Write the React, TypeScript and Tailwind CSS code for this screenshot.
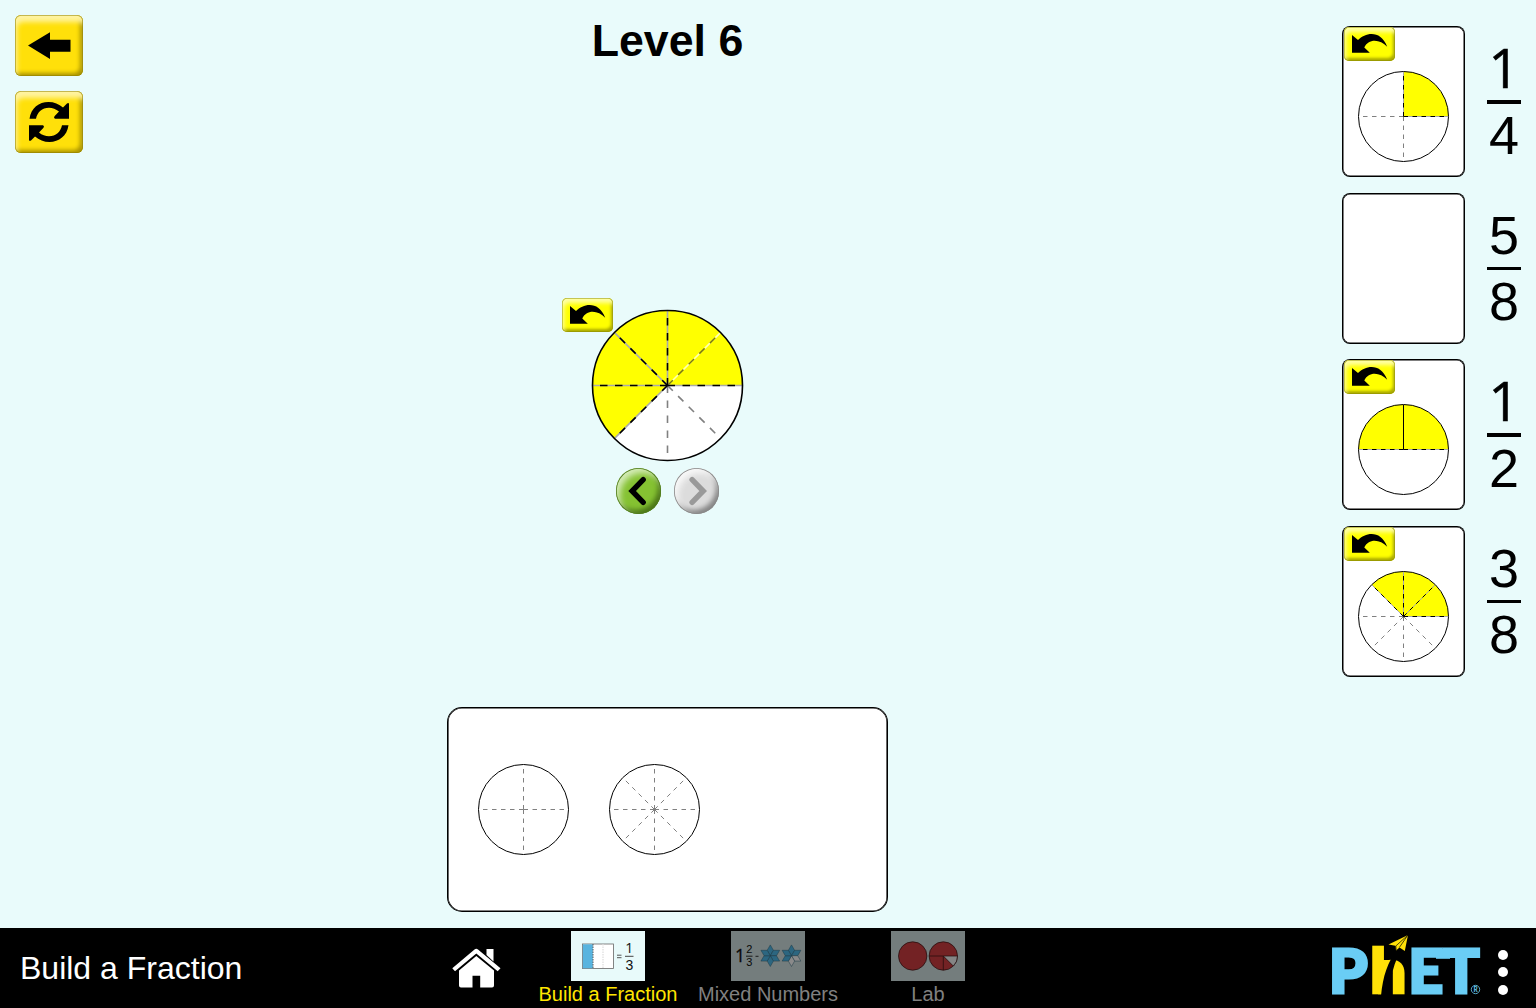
import React from "react";

const FONT = "font-['Liberation_Sans',Arial,sans-serif]";

function polar(c: number, r: number, deg: number): [number, number] {
  const a = (deg * Math.PI) / 180;
  return [c + r * Math.cos(a), c - r * Math.sin(a)];
}

// A filled sector, angles measured counter-clockwise from the right.
function sector(c: number, r: number, from: number, to: number) {
  const [x1, y1] = polar(c, r, from);
  const [x2, y2] = polar(c, r, to);
  const large = to - from > 180 ? 1 : 0;
  return `M${c} ${c}L${x1} ${y1}A${r} ${r} 0 ${large} 0 ${x2} ${y2}Z`;
}

type PieProps = {
  r: number;
  parts: number;
  stroke: number;
  filledTo?: number;
  strong?: number[];
  soft?: number[];
  solid?: number[];
};

function Pie({ r, parts, stroke, filledTo = 0, strong = [], soft = [], solid = [] }: PieProps) {
  const c = r + 0.5;
  const size = c * 2;
  const dash = `${r / 10} ${r / 10}`;
  const angles = Array.from({ length: parts }, (_, i) => (i * 360) / parts);
  const ray = (a: number, color: string, dashed: boolean, key: string) => {
    const [x, y] = polar(c, r - 0.5, a);
    return (
      <line key={key} x1={c} y1={c} x2={x} y2={y} stroke={color} strokeWidth={stroke} strokeDasharray={dashed ? dash : undefined} />
    );
  };
  return (
    <svg width={size} height={size} viewBox={`0 0 ${size} ${size}`} className="block shrink-0 overflow-visible">
      <circle cx={c} cy={c} r={r} fill="#fff" />
      {filledTo > 0 && <path d={sector(c, r, 0, filledTo)} fill="#ff0" />}
      {angles
        .filter((a) => !strong.includes(a) && !soft.includes(a) && !solid.includes(a))
        .map((a) => ray(a, "#808080", true, `g${a}`))}
      {soft.map((a) => ray(a, "#ffffb8", false, `sb${a}`))}
      {soft.map((a) => ray(a, "#808000", true, `sd${a}`))}
      {strong.map((a) => ray(a, "#aaa", false, `b${a}`))}
      {strong.map((a) => ray(a, "#000", true, `d${a}`))}
      {solid.map((a) => ray(a, "#000", false, `s${a}`))}
      <circle cx={c} cy={c} r={r} fill="none" stroke="#000" strokeWidth={stroke} />
    </svg>
  );
}

function UndoButton() {
  return (
    <button className="flex h-[34px] w-[51px] items-center justify-start rounded-[5px] bg-[#ff0] shadow-[inset_0_0_0_0.7px_#8c8c00aa,inset_2px_5px_4px_#ffffa8,inset_-2px_-3px_3px_#a8a800]">
      <svg width="51" height="34" viewBox="0 0 51 34">
        <path d="M8 8L14 13C22 5 37 3 43.2 19.8C36 11.500 24 11.500 20.300 20.500L25.800 25.700H8Z" fill="#000" />
      </svg>
    </button>
  );
}

function SquareButton({ tall, children }: { tall?: boolean; children: React.ReactNode }) {
  return (
    <button
      className={`flex w-[68px] items-center justify-center rounded-[6px] bg-[#ffe00a] shadow-[inset_0_0_0_0.8px_#8c7c00aa,inset_2px_7px_5px_#fff3a0,inset_-3px_-3px_4px_#a89200] ${
        tall ? "h-[62px]" : "h-[61px]"
      }`}
    >
      {children}
    </button>
  );
}

function RoundButton({ enabled }: { enabled: boolean }) {
  return (
    <button
      className={
        enabled
          ? "flex h-[46px] w-[45px] items-center justify-center rounded-full bg-[#85c232] shadow-[inset_0_0_0_0.8px_#4f7a1d,inset_4px_5px_6px_#d5ecb8,inset_-3px_-4px_5px_#4b7518]"
          : "flex h-[46px] w-[45px] items-center justify-center rounded-full bg-[#dcdcdc] shadow-[inset_0_0_0_0.8px_#888,inset_4px_5px_6px_#f8f8f8,inset_-3px_-4px_5px_#858585]"
      }
    >
      <svg width="45" height="46" viewBox="0.500 0 45 46" fill="none" strokeWidth="5.4" strokeLinecap="round">
        {enabled ? (
          <path d="M27.700 11.700L16.600 23L27.700 34.300" stroke="#000" />
        ) : (
          <path d="M18.600 11.700L29.700 23L18.600 34.300" stroke="#999" />
        )}
      </svg>
    </button>
  );
}

function Fraction({ n, d }: { n: number; d: number }) {
  return (
    <div className="flex h-[151px] w-[34px] flex-col items-center pt-[14px] text-[54px] leading-[54px]">
      <span
        className={
          n === 1
            ? "mt-[-1px] h-[60px] font-['Open_Sans',sans-serif] [-webkit-text-stroke:0.6px_#000]"
            : "h-[59px]"
        }
      >
        {n}
      </span>
      <span className="h-[3.500px] w-[34px] shrink-0 bg-black" />
      <span className="pt-[4px]">{d}</span>
    </div>
  );
}

function Target({ n, d, children }: { n: number; d: number; children?: React.ReactNode }) {
  return (
    <div className="flex gap-[23px]">
      <div className="relative flex h-[149px] w-[121px] justify-center rounded-[7px] bg-white pt-[44px] shadow-[0_0_0_1px_#000,inset_0_0_0_0.5px_#000]">
        {children && (
          <div className="absolute left-[0.500px] top-0">
            <UndoButton />
          </div>
        )}
        {children}
      </div>
      <Fraction n={n} d={d} />
    </div>
  );
}

function Tab({ label, active, children }: { label: string; active?: boolean; children: React.ReactNode }) {
  return (
    <div className={active ? "flex w-[160px] flex-col items-center text-[#ffe600]" : "flex w-[160px] flex-col items-center text-[#808080]"}>
      <div className={active ? "h-[50px] w-[74px] bg-[#e8fafa]" : "h-[50px] w-[74px] bg-[#747d7d]"}>
        <svg width="74" height="50" viewBox="0 0 74 50" className={FONT}>
          {children}
        </svg>
      </div>
      <span className="mt-px whitespace-nowrap text-[20px] leading-[24px]">{label}</span>
    </div>
  );
}

function Star({ x, y, missing }: { x: number; y: number; missing: number[] }) {
  const R = 10.800;
  const q = R / Math.sqrt(3);
  const pt = (r: number, deg: number) => {
    const a = (deg * Math.PI) / 180;
    return `${x + r * Math.cos(a)},${y + r * Math.sin(a)}`;
  };
  return (
    <g stroke="#1d3a46" strokeWidth="0.5">
      {[0, 1, 2, 3, 4, 5].map((i) => {
        const a = -90 + i * 60;
        return (
          <polygon
            key={i}
            points={`${x},${y} ${pt(q, a - 30)} ${pt(R, a)} ${pt(q, a + 30)}`}
            fill={missing.includes(i) ? "#8a8a8a" : "#2c6680"}
          />
        );
      })}
    </g>
  );
}

function Logo() {
  return (
    <svg width="156" height="76" viewBox="1328 932 156 76" className="overflow-visible font-['Lato',sans-serif]">
      <g fontSize="60.500" fontWeight="900" strokeWidth="3.200">
        <text x="1329" y="993" fill="#6acdf5" stroke="#6acdf5" textLength="38.500" lengthAdjust="spacingAndGlyphs">P</text>
        <text x="1370" y="993" fill="#ffe108" stroke="#ffe108" strokeWidth="2.600" textLength="36.500" lengthAdjust="spacingAndGlyphs">h</text>
        <text x="1408.500" y="993" fill="#6acdf5" stroke="#6acdf5" textLength="71" lengthAdjust="spacingAndGlyphs">ET</text>
      </g>
      <path d="M1436 948.700H1450V958.800H1436Z" fill="#6acdf5" />
      <path d="M1380 960H1391.500L1382 994.300H1378Z" fill="#ffe108" />
      <path d="M1381 996C1383 976 1387 963 1399 946L1402 949C1394 962 1390 976 1390 996Z" fill="#000" />
      <path d="M1388.500 944.500L1408 935L1404.800 951L1399.500 947.500L1396 950.500L1395.500 945.800Z" fill="#ffe108" />
      <path d="M1408 935L1395.800 946L1396.200 950M1408 935L1399.300 947.500" fill="none" stroke="#000" strokeWidth="0.7" />
      <circle cx="1475.500" cy="989.500" r="4.200" fill="none" stroke="#6acdf5" strokeWidth="0.8" />
      <text x="1475.500" y="992" fontSize="6.500" fontWeight="700" textAnchor="middle" fill="#6acdf5">R</text>
    </svg>
  );
}

export default function App() {
  return (
    <div className={`flex h-[1008px] w-[1536px] flex-col overflow-hidden bg-[#e9fbfb] text-black ${FONT}`}>
      <main className="flex h-[928px]">
        <aside className="flex w-[447px] flex-col gap-[15px] pl-[15px] pt-[15px]">
          <SquareButton>
            <svg width="68" height="61" viewBox="0 0 68 61">
              <path d="M13 30.500L35 17.300V24.700H55.500V36.800H35V44Z" fill="#000" />
            </svg>
          </SquareButton>
          <SquareButton tall>
            <svg width="68" height="62" viewBox="15 91 68 62">
              <path id="cycle" d="M29.500 118.700C31 108 39 102 48.500 102C54 102 59 104 63 107.500L67 103.500Q69 102.200 69 104.500V118.700H55Q53.300 118 54.500 116.200L59 111.500C56 109 52.500 107.700 49 107.700C42 107.700 37.500 112 36 118.700Z" />
              <use href="#cycle" transform="rotate(180 49 122)" />
            </svg>
          </SquareButton>
        </aside>

        <section className="flex w-[441px] flex-col items-center">
          <h1 className="mt-[14px] text-[44.700px] font-bold leading-[54px]">Level 6</h1>
          <div className="relative mt-[242px]">
            <Pie r={75} parts={8} stroke={1.600} filledTo={225} strong={[0, 90, 135, 180, 225]} soft={[45]} />
            <div className="absolute left-[-30px] top-[-12px]">
              <UndoButton />
            </div>
          </div>
          <div className="mt-[7px] flex gap-[13px]">
            <RoundButton enabled />
            <RoundButton enabled={false} />
          </div>
          <div className="mt-[194px] flex h-[203px] w-[439px] shrink-0 items-center gap-[40.500px] rounded-[14px] bg-white pl-[29.500px] shadow-[0_0_0_1px_#000,inset_0_0_0_0.6px_#000]">
            <Pie r={45} parts={4} stroke={1} />
            <Pie r={45} parts={8} stroke={1} />
          </div>
        </section>

        <aside className="flex flex-1 flex-col items-end gap-[15.500px] pr-[15px] pt-[27px]">
          <Target n={1} d={4}>
            <Pie r={45} parts={4} stroke={1} filledTo={90} strong={[0, 90]} />
          </Target>
          <Target n={5} d={8} />
          <Target n={1} d={2}>
            <Pie r={45} parts={2} stroke={1} filledTo={180} strong={[0, 180]} solid={[90]} />
          </Target>
          <Target n={3} d={8}>
            <Pie r={45} parts={8} stroke={1} filledTo={135} strong={[0, 45, 90, 135]} />
          </Target>
        </aside>
      </main>

      <footer className="flex h-[80px] bg-black">
        <div className="flex w-[432px] items-center pl-[20px] text-[32px] leading-none text-white">Build a Fraction</div>
        <div className="w-[96px] pl-[20px] pt-[20px]">
          <svg width="49" height="40" viewBox="452 948 49 40" fill="#fff">
            <path d="M486.500 949H493.500V961.500L486.500 955Z" />
            <path d="M474.500 949.500Q476.300 948 478 949.500L500.500 968.300L497.700 971.300L476.300 953.500L455 971.300L452.300 968.300Z" />
            <path d="M459 970.500L476.300 956L494 970.500V985.500Q494 987.500 492 987.500H480.200V975.700H472.500V987.500H461Q459 987.500 459 985.500Z" />
          </svg>
        </div>
        <nav className="flex pt-[3px]">
          <Tab label="Build a Fraction" active>
            <rect x="11.500" y="13" width="31" height="24.500" fill="#fff" stroke="#666" strokeWidth="0.8" />
            <rect x="11.800" y="13.300" width="10" height="24" fill="#58b4df" />
            <path d="M22 13V37.500" stroke="#333" strokeWidth="0.8" strokeDasharray="1.500 1" />
            <path d="M32 13V37.500" stroke="#ddd" strokeWidth="1.200" strokeDasharray="1.500 1" />
            <path d="M46 24.200H50.500M46 26.700H50.500" stroke="#444" strokeWidth="0.9" />
            <text x="58.300" y="22.300" fontSize="14" textAnchor="middle" fill="#111" className="font-['Open_Sans',sans-serif]">1</text>
            <path d="M54 25.300H62.500" stroke="#444" strokeWidth="1" />
            <text x="58.300" y="39" fontSize="14" textAnchor="middle" fill="#111">3</text>
          </Tab>
          <Tab label="Mixed Numbers">
            <text x="4" y="31.300" fontSize="17.500" fill="#080808" stroke="#080808" strokeWidth="0.3" className="font-['Open_Sans',sans-serif]">1</text>
            <text x="18.300" y="22.300" fontSize="11" textAnchor="middle" fill="#080808">2</text>
            <path d="M15 25.200H21.500M24.500 25.300H27.500" stroke="#111" strokeWidth="0.9" />
            <text x="18.300" y="35.300" fontSize="11" textAnchor="middle" fill="#080808">3</text>
            <Star x={39.300} y={24.700} missing={[]} />
            <Star x={60.500} y={24.700} missing={[2, 3]} />
          </Tab>
          <Tab label="Lab">
            <g fill="#732224" stroke="#1c0a0a" strokeWidth="0.7">
              <circle cx="21.700" cy="25" r="14.200" />
              <circle cx="52.300" cy="25" r="14.200" />
              <path d="M38.100 25H52.300V39.200" fill="none" />
              <path d="M52.300 25H66.500A14.200 14.200 0 0 1 62.340 35.040Z" fill="#858585" />
            </g>
          </Tab>
        </nav>
        <div className="flex flex-1 justify-end gap-[14px] pr-[28px] pt-[4px]">
          <Logo />
          <div className="flex flex-col gap-[7.300px] pt-[18px]">
            <span className="size-[10px] rounded-full bg-white" />
            <span className="size-[10px] rounded-full bg-white" />
            <span className="size-[10px] rounded-full bg-white" />
          </div>
        </div>
      </footer>
    </div>
  );
}
